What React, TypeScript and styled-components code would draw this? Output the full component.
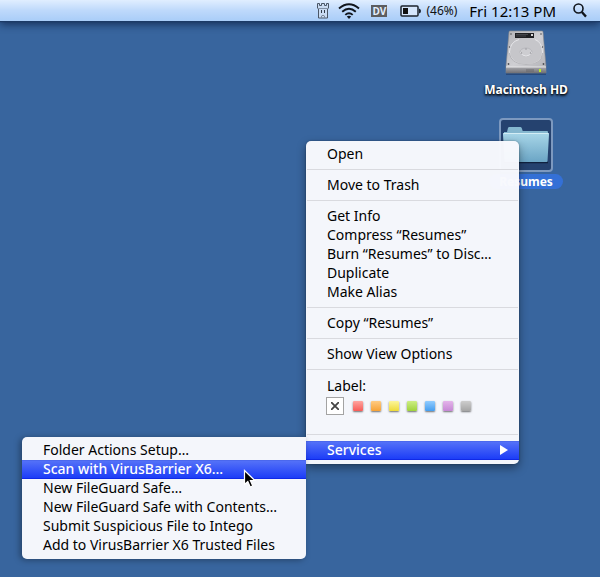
import React from "react";
import styled, { createGlobalStyle, css } from "styled-components";

const GlobalStyle = createGlobalStyle`
  * { box-sizing: border-box; }
  body {
    margin: 0;
    background: #38659e;
    font-family: "Noto Sans", "Open Sans", sans-serif;
  }
  button { font: inherit; border: 0; padding: 0; margin: 0; background: none; color: inherit; }
  svg { display: block; }
`;

const Desktop = styled.div`
  position: relative;
  min-height: 100vh;
  display: flex;
  flex-direction: column;
  overflow: hidden;
  background: #38659e;
`;

const MenuBar = styled.header`
  display: flex;
  align-items: center;
  justify-content: flex-end;
  height: 21px;
  padding-right: 13px;
  background: linear-gradient(#e0eeff, #bed9fb 50%, #a9cdf8);
  box-shadow: 0 1px 1px #1c3a66, 0 3px 8px rgba(10, 25, 60, 0.75);
`;

const StatusButton = styled.button<{ $gap: number }>`
  display: flex;
  align-items: center;
  gap: 5px;
  margin-right: ${(p) => p.$gap}px;
`;

const Percent = styled.span`
  font-size: 12px;
  line-height: 20px;
  color: #111;
`;

const Clock = styled.span`
  font-size: 15px;
  line-height: 20px;
  color: #000;
`;

const DvBadge = styled.span`
  width: 16px;
  height: 12px;
  background: #5c5d60;
  color: #e3efff;
  font: 700 10px/12px "Open Sans", sans-serif;
  text-align: center;
`;

const Icons = styled.main`
  display: flex;
  flex-direction: column;
  align-items: center;
  align-self: flex-end;
  width: 96px;
  margin-right: 26px;
  padding-top: 7px;
  gap: 21px;
`;

const DesktopIcon = styled.button`
  display: flex;
  flex-direction: column;
  align-items: center;
`;

const IconFrame = styled.span<{ $selected?: boolean }>`
  display: flex;
  align-items: flex-start;
  justify-content: center;
  width: 54px;
  height: 54px;
  border-radius: 4px;
  border: 2px solid transparent;
  ${(p) =>
    p.$selected &&
    css`
      align-items: center;
      border-color: #7d99bf;
      background: #25426f;
    `}
`;

const IconName = styled.span<{ $selected?: boolean }>`
  font-size: 12px;
  font-weight: 700;
  line-height: 15px;
  padding: 0 10px;
  border-radius: 8px;
  color: #fff;
  white-space: nowrap;
  text-shadow: 0 1px 2px #000, 0 2px 3px rgba(0, 0, 0, 0.7);
  ${(p) =>
    p.$selected &&
    css`
      margin-top: 2px;
      background: #3470d6;
      text-shadow: none;
    `}
`;

const menuPanel = css`
  position: absolute;
  padding: 4px 0;
  background: rgba(248, 249, 253, 0.98);
  box-shadow: 0 4px 10px rgba(0, 0, 0, 0.4), 0 0 2px rgba(0, 0, 0, 0.35);
`;

const ContextMenu = styled.div`
  ${menuPanel}
  top: 141px;
  right: 81px;
  width: 213px;
  border-radius: 5px 5px 5px 0;
`;

const Submenu = styled.div`
  ${menuPanel}
  top: -4px;
  right: 100%;
  width: 284px;
  border-radius: 5px 0 5px 5px;
  box-shadow: -2px 1px 6px rgba(0, 0, 0, 0.35);
`;

const Item = styled.button<{ $active?: boolean }>`
  display: flex;
  align-items: center;
  justify-content: space-between;
  width: 100%;
  height: 19px;
  padding: 0 11px 2px 21px;
  font-size: 14px;
  line-height: 17px;
  text-align: left;
  white-space: nowrap;
  color: #000;
  ${(p) =>
    p.$active &&
    css`
      color: #fff;
      font-weight: 500;
      background: linear-gradient(#5774f8, #193af7);
      box-shadow: inset 0 -1px #1029e6, inset 0 1px #4b68ee;
    `}
`;

const Separator = styled.hr`
  height: 1px;
  margin: 5px 1px 6px;
  border: 0;
  background: #d9dadf;
`;

const SubmenuAnchor = styled.div`
  position: relative;
`;

const LabelGroup = styled.fieldset`
  margin: 0;
  padding: 0 20px 14px;
  border: 0;
  font-size: 14px;
  line-height: 19px;
`;

const LabelTitle = styled.legend`
  padding: 0 1px;
`;

const Swatches = styled.div`
  display: flex;
  align-items: center;
  gap: 8px;
  padding-top: 2px;
`;

const Swatch = styled.input<{ $from: string; $to: string }>`
  appearance: none;
  width: 10px;
  height: 10px;
  margin: 0;
  border-radius: 1px;
  background: linear-gradient(${(p) => p.$from}, ${(p) => p.$to});
  box-shadow: 0 1px 2px rgba(0, 0, 0, 0.55);
`;

const NoLabel = styled.label`
  display: flex;
  align-items: center;
  justify-content: center;
  width: 18px;
  height: 18px;
  margin-right: 1px;
  border: 1px solid #a3a3a3;
  background: #fff;
  input { appearance: none; position: absolute; margin: 0; width: 16px; height: 16px; }
`;

const Pointer = styled.svg`
  position: absolute;
  left: 221px;
  top: 32px;
  pointer-events: none;
`;

const labelColors = [
  ["Red", "#ffa5a0", "#f75c58"],
  ["Orange", "#ffcb83", "#f6a237"],
  ["Yellow", "#fcf59a", "#eedb38"],
  ["Green", "#cdee85", "#9fd33b"],
  ["Blue", "#91ccff", "#469eef"],
  ["Purple", "#e4b4ea", "#c688d5"],
  ["Gray", "#cdcdcd", "#a5a5a5"],
];

const services = [
  "Folder Actions Setup…",
  "Scan with VirusBarrier X6…",
  "New FileGuard Safe…",
  "New FileGuard Safe with Contents…",
  "Submit Suspicious File to Intego",
  "Add to VirusBarrier X6 Trusted Files",
];

const groups = [
  ["Open"],
  ["Move to Trash"],
  ["Get Info", "Compress “Resumes”", "Burn “Resumes” to Disc…", "Duplicate", "Make Alias"],
  ["Copy “Resumes”"],
  ["Show View Options"],
];

const TowerIcon = () => (
  <svg width="12" height="16" viewBox="0 0 12 16" fill="none" stroke="#4a5666">
    <path d="M.5 .5h2v2h2v-2h3v2h2v-2h2v4.500l-1 1v9h-9v-9l-1-1z" fill="#c9dbf2" />
    <path d="M1.500 5.500h9" stroke="#8191a6" />
    <path d="M4.500 7v3M7.500 7v3" stroke="#303947" />
    <path d="M4.500 15v-2q1.500-1.500 3 0v2" stroke="#7b899c" />
  </svg>
);

const WifiIcon = () => (
  <svg width="22" height="16" viewBox="0 0 22 16" fill="none" stroke="#10151c">
    <path d="M1 5.500Q11-2.800 21 5.500M4.200 8.800Q11 2.900 17.800 8.800M7.300 11.900Q11 8.400 14.700 11.900" strokeWidth="1.900" />
    <path d="M8.800 13.600Q11 11.800 13.200 13.600L11 16z" fill="#10151c" stroke="none" />
  </svg>
);

const BatteryIcon = () => (
  <svg width="21" height="12" viewBox="0 0 21 12">
    <rect x="1" y="1" width="17" height="10" rx="1" fill="#d5e6fc" stroke="#1b232d" strokeWidth="1.500" />
    <rect x="3" y="3" width="5" height="6" fill="#111" />
    <path d="M19 3.500q2 .5 2 2.500t-2 2.500z" fill="#1b232d" />
  </svg>
);

const SearchIcon = () => (
  <svg width="14" height="15" viewBox="0 0 14 15" fill="none" stroke="#10151c">
    <circle cx="5.500" cy="5.500" r="4.500" strokeWidth="1.600" />
    <path d="M8.800 9l4.200 4.600" strokeWidth="2.300" />
  </svg>
);

const DriveIcon = () => (
  <svg width="44" height="45" viewBox="0 1 44 45">
    <defs>
      <linearGradient id="driveTop" x1="0" y1="0" x2="1" y2="1">
        <stop offset="0" stopColor="#b4b4b8" />
        <stop offset=".5" stopColor="#cfcfd3" />
        <stop offset="1" stopColor="#b0b0b5" />
      </linearGradient>
      <linearGradient id="driveFront" x1="0" y1="0" x2="0" y2="1">
        <stop offset="0" stopColor="#a8a8ac" />
        <stop offset="1" stopColor="#707075" />
      </linearGradient>
    </defs>
    <path d="M2 44h40v2H2z" fill="#16305c" opacity=".5" />
    <path d="M5 3q0-1 1-1h32q1 0 1 1l3 34v7H2v-7z" fill="url(#driveTop)" stroke="#85868c" strokeWidth=".6" />
    <path d="M2 38h40v6H2z" fill="url(#driveFront)" />
    <path d="M2 38h40" stroke="#e6e6e8" />
    <path d="M15 10.500Q6 13 5.500 23q1 12 16.500 12.500T38.500 23Q38 13 31 10.500" fill="#c6c6ca" stroke="#e6e6e9" />
    <path d="M5.500 24q1 11 16.500 11.500T38.500 24" fill="none" stroke="#a3a3a8" strokeWidth=".7" />
    <ellipse cx="22" cy="23" rx="6" ry="4" fill="#cdcdd1" stroke="#b0b0b5" strokeWidth=".7" />
    <path d="M16.500 23q1 4 5.500 4t5.500-4" fill="none" stroke="#ececef" strokeWidth=".9" />
    <g fill="#8d8d92"><circle cx="22" cy="20" r=".7" /><circle cx="17.500" cy="24" r=".7" /><circle cx="26.500" cy="24" r=".7" /></g>
    <path d="M11 4h19v5H11z" fill="#1f2023" />
    <path d="M12 5.500h12M12 7h10" stroke="#55575c" strokeWidth=".7" />
    <path d="M27 5h2v2h-2z" fill="#d8d8d8" />
    <g fill="#4d4e53"><circle cx="7" cy="5" r=".8" /><circle cx="37" cy="5" r=".8" /><circle cx="5.500" cy="18" r=".7" /><circle cx="38.500" cy="18" r=".7" /><circle cx="4.500" cy="35" r=".9" /><circle cx="39.500" cy="35" r=".9" /></g>
    <path d="M23 40v3M25 40v3M27 40v3M29 40v3" stroke="#5b5b60" strokeWidth=".7" />
    <path d="M35 40h2v3h-2z" fill="#b7ec29" />
  </svg>
);

const FolderIcon = () => (
  <svg width="48" height="38" viewBox="0 0 48 38">
    <defs>
      <linearGradient id="folderFront" x1="0" y1="0" x2="0" y2="1">
        <stop offset="0" stopColor="#a8d6e8" />
        <stop offset="1" stopColor="#6ba5c5" />
      </linearGradient>
    </defs>
    <path d="M2 36.500h44" stroke="#10213f" strokeWidth="1.500" />
    <path d="M2 6h3l1-4q.3-1 1.300-1h11q1 0 1.400 1l1 3H45q1 0 1 1v8H2z" fill="#85b7cf" />
    <path d="M1 8.500Q.8 7 2 7h44q1.200 0 1 1.500L45.500 35q0 1-1 1h-41q-1 0-1-1z" fill="url(#folderFront)" />
    <path d="M1.500 7.500h45" stroke="#d3edf5" />
  </svg>
);

export default function App() {
  return (
    <>
      <GlobalStyle />
      <Desktop>
        <MenuBar>
          <StatusButton $gap={9} aria-label="Intego"><TowerIcon /></StatusButton>
          <StatusButton $gap={11} aria-label="Wi-Fi"><WifiIcon /></StatusButton>
          <StatusButton $gap={13}><DvBadge>DV</DvBadge></StatusButton>
          <StatusButton $gap={12} aria-label="Battery 46%"><BatteryIcon /><Percent>(46%)</Percent></StatusButton>
          <StatusButton $gap={17}><Clock>Fri 12:13 PM</Clock></StatusButton>
          <StatusButton $gap={0} aria-label="Search"><SearchIcon /></StatusButton>
        </MenuBar>
        <Icons>
          <DesktopIcon>
            <IconFrame><DriveIcon /></IconFrame>
            <IconName>Macintosh HD</IconName>
          </DesktopIcon>
          <DesktopIcon>
            <IconFrame $selected><FolderIcon /></IconFrame>
            <IconName $selected>Resumes</IconName>
          </DesktopIcon>
        </Icons>
        <ContextMenu role="menu">
          {groups.map((group) => (
            <React.Fragment key={group[0]}>
              {group.map((name) => <Item key={name} role="menuitem">{name}</Item>)}
              <Separator />
            </React.Fragment>
          ))}
          <LabelGroup>
            <LabelTitle>Label:</LabelTitle>
            <Swatches>
              <NoLabel>
                <input type="radio" name="label" aria-label="None" defaultChecked />
                <svg width="8" height="8" viewBox="0 0 8 8"><path d="M0 0l8 8M8 0L0 8" stroke="#444" strokeWidth="1.800" /></svg>
              </NoLabel>
              {labelColors.map(([name, from, to]) => (
                <Swatch key={name} type="radio" name="label" aria-label={name} $from={from} $to={to} />
              ))}
            </Swatches>
          </LabelGroup>
          <Separator />
          <SubmenuAnchor>
            <Item $active role="menuitem" aria-haspopup="menu" aria-expanded="true">
              Services
              <svg width="8" height="10" viewBox="0 0 8 10"><path d="M0 0l8 5-8 5z" fill="#fff" /></svg>
            </Item>
            <Submenu role="menu">
              {services.map((name, i) => <Item key={name} $active={i === 1} role="menuitem">{name}</Item>)}
              <Pointer width="14" height="20" viewBox="0 0 14 20">
                <path d="M1.500 1.500v14l3.300-3 2.400 5.500 2.600-1.100-2.400-5.400h4.400z" fill="#000" stroke="#fff" strokeWidth="1.200" />
              </Pointer>
            </Submenu>
          </SubmenuAnchor>
        </ContextMenu>
      </Desktop>
    </>
  );
}
